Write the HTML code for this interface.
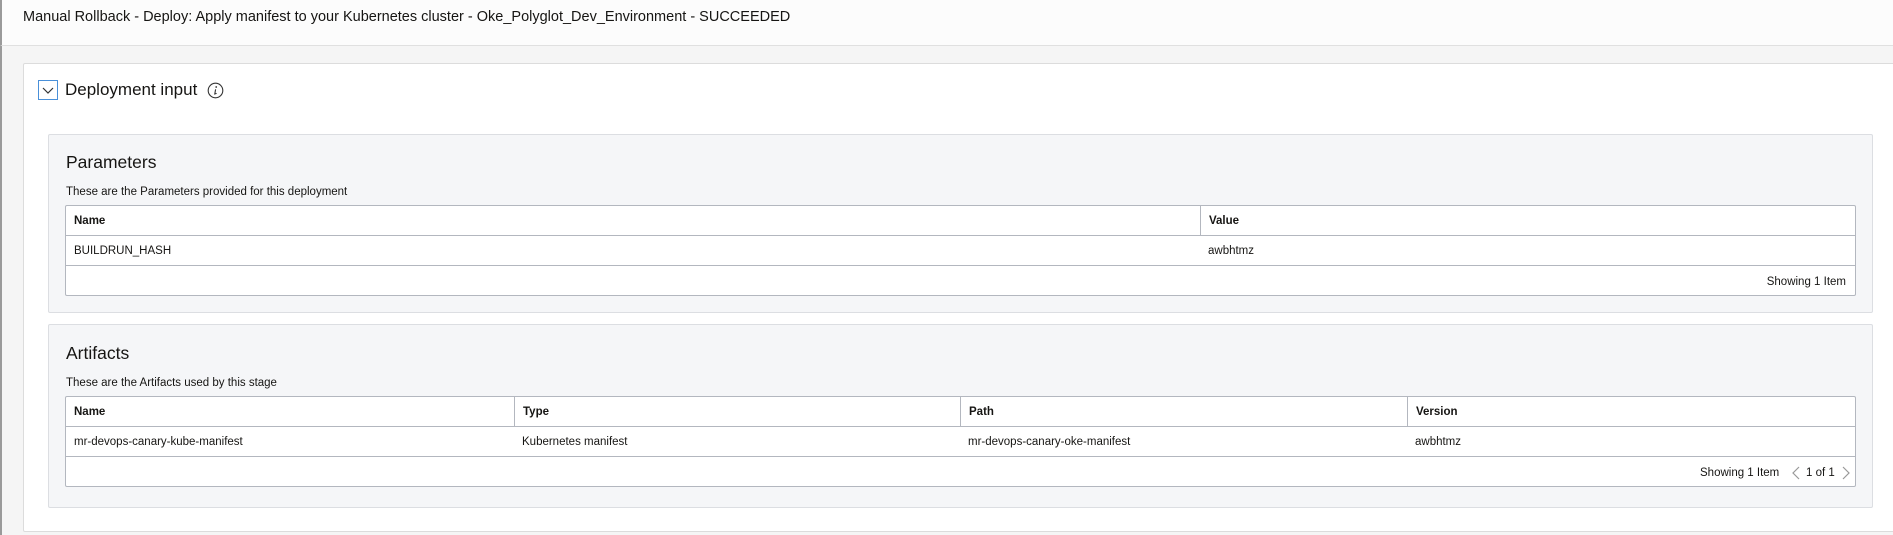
<!DOCTYPE html>
<html><head><meta charset="utf-8"><style>
*{box-sizing:border-box;margin:0;padding:0}
body{width:1893px;height:535px;overflow:hidden;background:#f5f5f5;font-family:"Liberation Sans",Arial,sans-serif;color:#161513;position:relative}
.abs{position:absolute}
.hdr{left:0;top:0;width:1893px;height:46px;background:#fcfcfc;border-bottom:1px solid #e0e0e0;border-left:2px solid #9a9a9a}
.hdr span{position:absolute;left:21px;top:9px;font-size:14.5px;white-space:nowrap}
.lb{left:0;top:46px;width:2px;height:489px;background:#9a9a9a}
.outer{left:23px;top:63px;width:1880px;height:469px;background:#fff;border:1px solid #dcdcdc;border-radius:2px}
.tog{left:38px;top:80px;width:20px;height:20px;border:1px solid #4a90d9;background:#fff}
.panel{background:#f5f6f8;border:1px solid #dcdee2;border-radius:2px;left:48px;width:1825px}
.ptitle{font-size:17.5px;position:absolute;left:17px}
.pdesc{font-size:11.5px;position:absolute;left:17px;top:51px}
.tbl{position:absolute;left:16px;width:1791px;background:#fff;border:1px solid #b3b7bf;border-radius:2px}
.row{position:relative;height:30px;border-bottom:1px solid #b3b7bf;font-size:11.5px}
.row div{position:absolute;top:1px;height:29px;line-height:29px;padding-left:8px}
.row.h div{font-weight:bold;top:0;padding-top:1px}
.row.h div+div{border-left:1px solid #b3b7bf}
.foot{height:29px;position:relative;font-size:11.5px}
</style></head><body>
<div class="abs hdr"><span>Manual Rollback - Deploy: Apply manifest to your Kubernetes cluster - Oke_Polyglot_Dev_Environment - SUCCEEDED</span></div>
<div class="abs lb"></div>
<div class="abs outer"></div>
<div class="abs tog"><svg width="18" height="18" viewBox="0 0 18 18"><path d="M4 7 L9 12 L14 7" fill="none" stroke="#333" stroke-width="1.2"/></svg></div>
<div class="abs" style="left:65px;top:80px;font-size:17px;white-space:nowrap">Deployment input</div>
<div class="abs" style="left:207px;top:82px"><svg width="17" height="17" viewBox="0 0 17 17"><circle cx="8.5" cy="8.5" r="7.3" fill="none" stroke="#333" stroke-width="1.1"/><circle cx="9.2" cy="5" r="0.9" fill="#333"/><path d="M8.6 7.3 L7.8 12 L9.6 11.4" fill="none" stroke="#333" stroke-width="1.1"/></svg></div>

<div class="abs panel" style="top:134px;height:179px">
  <div class="ptitle" style="top:17px">Parameters</div>
  <div class="pdesc">These are the Parameters provided for this deployment</div>
  <div class="tbl" style="top:70px">
    <div class="row h"><div style="left:0;width:1134px">Name</div><div style="left:1134px;width:657px">Value</div></div>
    <div class="row"><div style="left:0">BUILDRUN_HASH</div><div style="left:1134px">awbhtmz</div></div>
    <div class="foot"><span style="position:absolute;right:9px;top:10px">Showing 1 Item</span></div>
  </div>
</div>

<div class="abs panel" style="top:324px;height:184px">
  <div class="ptitle" style="top:18px">Artifacts</div>
  <div class="pdesc" style="top:52px">These are the Artifacts used by this stage</div>
  <div class="tbl" style="top:71px">
    <div class="row h"><div style="left:0;width:448px">Name</div><div style="left:448px;width:447px">Type</div><div style="left:894px;width:447px">Path</div><div style="left:1341px;width:450px">Version</div></div>
    <div class="row"><div style="left:0">mr-devops-canary-kube-manifest</div><div style="left:448px">Kubernetes manifest</div><div style="left:894px">mr-devops-canary-oke-manifest</div><div style="left:1341px">awbhtmz</div></div>
    <div class="foot">
      <span style="position:absolute;left:1634px;top:10px">Showing 1 Item</span>
      <svg style="position:absolute;left:1725px;top:9px" width="10" height="14" viewBox="0 0 10 14"><path d="M8 1 L2 7 L8 13" fill="none" stroke="#999" stroke-width="1.2"/></svg>
      <span style="position:absolute;left:1740px;top:10px">1 of 1</span>
      <svg style="position:absolute;left:1775px;top:9px" width="10" height="14" viewBox="0 0 10 14"><path d="M2 1 L8 7 L2 13" fill="none" stroke="#999" stroke-width="1.2"/></svg>
    </div>
  </div>
</div>
</body></html>
